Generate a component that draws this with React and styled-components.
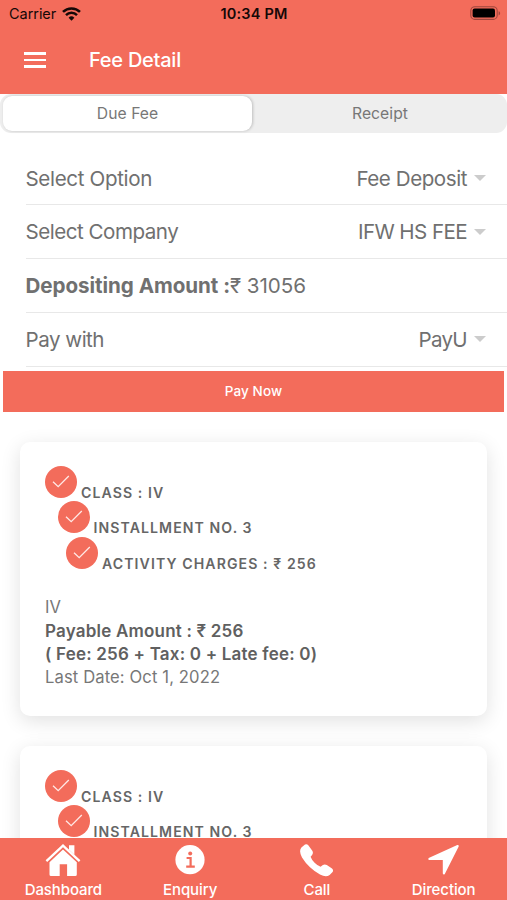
import React, { useState } from 'react';
import styled, { createGlobalStyle } from 'styled-components';

const OPTIONS = [
  { label: 'Select Option', value: 'Fee Deposit', spacing: -0.35, valueSpacing: -0.45 },
  { label: 'Select Company', value: 'IFW HS FEE', spacing: -0.5, valueSpacing: -0.6 },
];

const FEES = [
  { id: 1, className: 'IV', installment: 3, amount: 256, lastDate: 'Oct 1, 2022' },
  { id: 2, className: 'IV', installment: 3, amount: 256, lastDate: 'Oct 1, 2022' },
];

const MENUS = [
  { label: 'Dashboard', icon: HomeIcon },
  { label: 'Enquiry', icon: InfoIcon },
  { label: 'Call', icon: CallIcon },
  { label: 'Direction', icon: DirectionIcon },
];

function HomeIcon() {
  return (
    <svg width="36" height="34" viewBox="0 0 36 34" fill="#fff">
      <path d="M1.4 18.2 18 2.6l16.6 15.6" fill="none" stroke="#fff" strokeWidth="2.3" />
      <path d="M24 2.2h5.4v9.6L24 6.8Z" />
      <path d="M18 6.4 31.8 19.3v12.2q0 1.5-1.5 1.5h-8.2V21.2h-7.4V33H6q-1.5 0-1.5-1.5V19.3Z" />
    </svg>
  );
}

function InfoIcon() {
  return (
    <svg width="36" height="34" viewBox="0 0 36 34">
      <circle cx="18" cy="16.7" r="14.6" fill="#fff" />
      <circle cx="18.2" cy="10.5" r="2" fill="#f36c5b" />
      <path d="M14.6 15h4v8.6M14.2 23.6h8.6" fill="none" stroke="#f36c5b" strokeWidth="2.2" />
    </svg>
  );
}

function CallIcon() {
  return (
    <svg width="36" height="34" viewBox="0 0 36 34" fill="#fff">
      <path d="M2.4 4.6 6 1.6Q7.8.5 9.3 2.2l4 5.5q1.3 2.4-.2 4.2l-1.5 1.8q1 3 4 6t6 4.1l1.9-1.5q2.2-1.7 4.3-.2l5.2 3.5q1.8 1.6.6 3.4l-3 3Q27 34.6 21 31.5 9.5 25 3 14.5-.5 8 2.4 4.6Z" />
    </svg>
  );
}

function DirectionIcon() {
  return (
    <svg width="36" height="34" viewBox="0 0 36 34" fill="#fff">
      <path d="M31.3 2 2.700 15q-1.3 1.6.4 1.9H16.8V30.5q.7 1.9 2 .4L32.7 3.4Q33 1.7 31.3 2Z" />
    </svg>
  );
}

function CheckMark() {
  return (
    <CheckCircle>
      <svg width="32" height="32" viewBox="0 0 32 32" fill="none">
        <path d="M8 15.7 13.2 20.7 23.8 10" stroke="#ffe9e6" strokeWidth="1.3" />
      </svg>
    </CheckCircle>
  );
}

function SelectRow({ label, value, spacing, valueSpacing }) {
  return (
    <Row>
      <RowText $spacing={spacing}>{label}</RowText>
      <SelectValue>
        <RowText $spacing={valueSpacing}>{value}</RowText>
        <Caret />
      </SelectValue>
    </Row>
  );
}

function FeeCard({ fee }) {
  return (
    <Card>
      <CheckRow $indent={0}>
        <CheckMark />
        <CheckLabel>CLASS : {fee.className}</CheckLabel>
      </CheckRow>
      <CheckRow $indent={12.5}>
        <CheckMark />
        <CheckLabel>INSTALLMENT NO. {fee.installment}</CheckLabel>
      </CheckRow>
      <CheckRow $indent={21}>
        <CheckMark />
        <CheckLabel>ACTIVITY CHARGES : ₹ {fee.amount}</CheckLabel>
      </CheckRow>
      <Summary>
        <SummaryLine>{fee.className}</SummaryLine>
        <SummaryLine $bold>Payable Amount : ₹ {fee.amount}</SummaryLine>
        <SummaryLine $bold>
          ( Fee: {fee.amount} + Tax: 0 + Late fee: 0)
        </SummaryLine>
        <SummaryLine>Last Date: {fee.lastDate}</SummaryLine>
      </Summary>
    </Card>
  );
}

function App() {
  const [tab, setTab] = useState('due');

  return (
    <Screen>
      <GlobalStyle />
      <Header>
        <StatusBar>
          <Carrier>
            Carrier
            <svg width="19" height="14" viewBox="0 0 19 14" fill="none" stroke="#150807">
              <path d="M1 4.9a12.2 12.2 0 0 1 17 0" strokeWidth="2.6" />
              <path d="M4 8.1a7.8 7.8 0 0 1 11 0" strokeWidth="2.5" />
              <path d="M9.5 13.7 6.6 10.8a4.1 4.1 0 0 1 5.8 0Z" fill="#150807" stroke="none" />
            </svg>
          </Carrier>
          <Time>10:34 PM</Time>
          <Battery>
            <svg width="31" height="15" viewBox="0 0 31 15">
              <rect x="0.8" y="0.8" width="26.4" height="12.6" rx="4" fill="none" stroke="#9f463d" strokeWidth="1.1" />
              <rect x="2.6" y="2.6" width="22.4" height="9" rx="2" fill="#000" />
              <path d="M28.6 5.2v4.2c1-.4 1.5-1.2 1.5-2.1s-.5-1.7-1.5-2.1Z" fill="#9f463d" />
            </svg>
          </Battery>
        </StatusBar>
        <TitleBar>
          <MenuButton aria-label="Menu">
            <MenuLine />
            <MenuLine />
            <MenuLine />
          </MenuButton>
          <Title>Fee Detail</Title>
        </TitleBar>
      </Header>

      <Content>
        <Segment>
          <SegmentButton $active={tab === 'due'} onClick={() => setTab('due')}>
            Due Fee
          </SegmentButton>
          <SegmentButton $active={tab === 'receipt'} onClick={() => setTab('receipt')}>
            Receipt
          </SegmentButton>
        </Segment>

        <Form>
          {OPTIONS.map((option) => (
            <SelectRow key={option.label} {...option} />
          ))}
          <Row>
            <RowText $spacing={-0.05}>
              <b>Depositing Amount :</b>₹ 31056
            </RowText>
          </Row>
          <SelectRow label="Pay with" value="PayU" spacing={-0.5} valueSpacing={-0.7} />
        </Form>

        <PayButton>Pay Now</PayButton>

        <CardList>
          {FEES.map((fee) => (
            <FeeCard key={fee.id} fee={fee} />
          ))}
        </CardList>
      </Content>

      <Footer>
        {MENUS.map(({ label, icon: Icon }) => (
          <FooterItem key={label}>
            <Icon />
            <FooterLabel>{label}</FooterLabel>
          </FooterItem>
        ))}
      </Footer>
    </Screen>
  );
}

export default App;

const GlobalStyle = createGlobalStyle`
  * {
    box-sizing: border-box;
  }

  body {
    margin: 0;
    background-color: #fff;
    overflow: hidden;
  }

  button {
    padding: 0;
    border: none;
    background: none;
    font-family: inherit;
  }
`;

const Screen = styled.div`
  width: 507px;
  height: 900px;
  overflow: hidden;

  display: flex;
  flex-direction: column;

  background-color: #fff;
  color: #707070;
  font-family: Inter, 'Liberation Sans', sans-serif;
`;

const Header = styled.header`
  height: 94px;
  flex-shrink: 0;

  background-color: #f36c5b;
`;

const StatusBar = styled.div`
  height: 27px;
  padding: 0 6px 0 9px;

  display: grid;
  grid-template-columns: 1fr auto 1fr;
  align-items: center;

  color: #150807;
  font-size: 14.5px;
`;

const Carrier = styled.div`
  display: flex;
  align-items: center;
  gap: 5.5px;

  letter-spacing: -0.05px;
`;

const Time = styled.div`
  margin-right: 2px;

  font-weight: 600;
  letter-spacing: 0.2px;
`;

const Battery = styled.div`
  display: flex;
  justify-content: flex-end;
`;

const TitleBar = styled.div`
  height: 66px;
  padding-left: 24px;

  display: flex;
  align-items: center;
`;

const MenuButton = styled.button`
  width: 22px;
  margin-right: 43px;

  display: flex;
  flex-direction: column;
  gap: 4px;
`;

const MenuLine = styled.span`
  height: 2.5px;

  background-color: #fff;
`;

const Title = styled.h1`
  margin: 0;

  color: #fff;
  font-size: 20px;
  font-weight: 500;
  letter-spacing: -0.25px;
`;

const Content = styled.main`
  flex: 1;
  min-height: 0;
  overflow: hidden;
`;

const Segment = styled.div`
  height: 39px;
  padding: 2px 2px 2px 3px;

  display: grid;
  grid-template-columns: 249px 1fr;
  column-gap: 3px;

  background-color: #eee;
  border-radius: 11px;
`;

const SegmentButton = styled.button`
  height: 35px;
  border-radius: 9px;

  background-color: ${({ $active }) => ($active ? '#fff' : 'transparent')};
  box-shadow: ${({ $active }) => ($active ? '1px 0 3px rgba(0, 0, 0, 0.2)' : 'none')};
  color: #777;
  font-size: 15.7px;
  letter-spacing: 0.05px;
`;

const Form = styled.div`
  padding: 18.8px 0 0 25.5px;
`;

const Row = styled.div`
  height: 53.7px;
  padding-right: 21px;

  border-bottom: 1px solid #e8e8e8;

  display: flex;
  align-items: center;
  justify-content: space-between;
`;

const RowText = styled.span`
  font-size: 20.6px;
  letter-spacing: ${({ $spacing }) => $spacing}px;
  white-space: nowrap;
`;

const SelectValue = styled.div`
  display: flex;
  align-items: center;
  gap: 7px;
`;

const Caret = styled.span`
  border-top: 6px solid #ccc;
  border-left: 6px solid transparent;
  border-right: 6px solid transparent;
`;

const PayButton = styled.button`
  width: 501px;
  height: 41px;
  margin: 4.2px 3px 0;

  display: block;

  background-color: #f36c5b;
  color: #fff;
  font-size: 13.5px;
  font-weight: 500;
  letter-spacing: 0.1px;
`;

const CardList = styled.div`
  padding: 30px 20px 0;

  display: flex;
  flex-direction: column;
  gap: 30px;
`;

const Card = styled.section`
  height: 274px;
  padding: 24px 25px;
  flex-shrink: 0;

  border-radius: 10px;
  background-color: #fff;
  box-shadow: 0 5px 20px rgba(0, 0, 0, 0.12);
`;

const CheckRow = styled.div`
  height: 35.5px;
  padding-left: ${({ $indent }) => $indent}px;

  display: flex;
  align-items: flex-start;
  gap: 4px;
`;

const CheckCircle = styled.span`
  width: 32px;
  height: 32px;

  border-radius: 50%;
  background-color: #f36c5b;
`;

const CheckLabel = styled.span`
  padding-top: 18px;

  color: #666;
  font-size: 14.1px;
  font-weight: 600;
  line-height: 18px;
  letter-spacing: 1.08px;
`;

const Summary = styled.div`
  margin-top: 24px;
`;

const SummaryLine = styled.p`
  margin: 0;

  color: ${({ $bold }) => ($bold ? '#606060' : '#777')};
  font-size: ${({ $bold }) => ($bold ? 17 : 16.6)}px;
  font-weight: ${({ $bold }) => ($bold ? 600 : 400)};
  line-height: 23.3px;
  letter-spacing: ${({ $bold }) => ($bold ? 0.2 : 0.12)}px;
`;

const Footer = styled.nav`
  height: 62px;
  flex-shrink: 0;

  display: grid;
  grid-template-columns: repeat(4, 1fr);

  background-color: #f36c5b;
  color: #fff;
`;

const FooterItem = styled.div`
  padding: 5px 0 0;

  display: flex;
  flex-direction: column;
  align-items: center;
`;

const FooterLabel = styled.span`
  margin-top: 3px;

  font-size: 15px;
  font-weight: 500;
  line-height: 20px;
  letter-spacing: -0.1px;
`;
